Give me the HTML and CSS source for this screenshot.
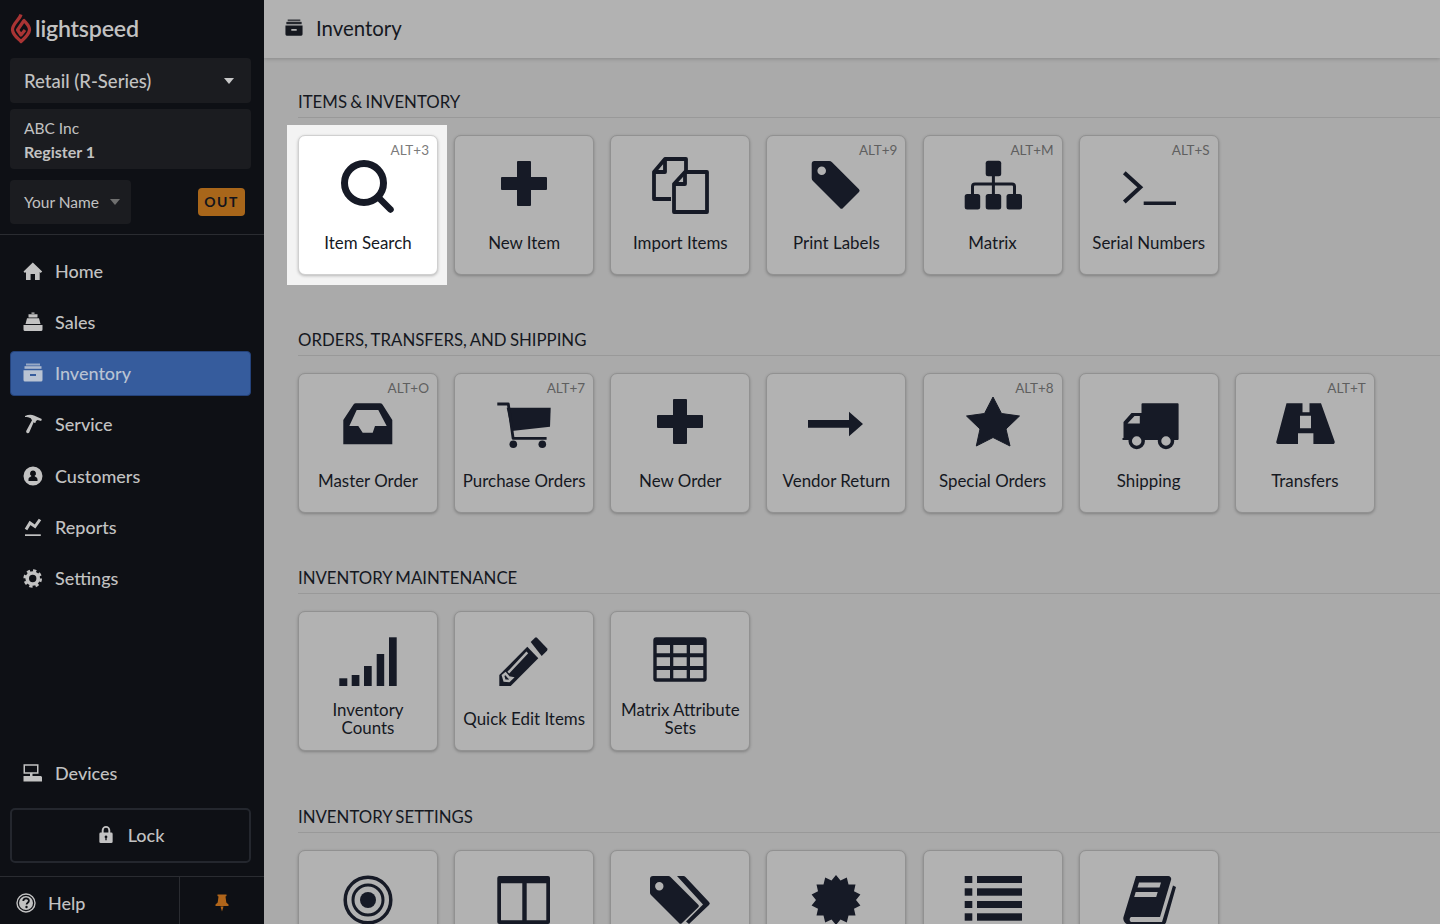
FILE: index.html
```html
<html>
    <head>
        <title>Inventory</title>
        <link rel="stylesheet" href="styles.css">
    </head>
    <body>
        <svg class="sprites" width="0" height="0">
            <symbol id="i-archive" viewBox="0 0 20 20">
                <path d="M3 .5h14v2H3z" opacity=".75"/>
                <path d="M1.5 3.2h17v2.6h-17z" opacity=".9"/>
                <path fill-rule="evenodd" d="M.5 7.2h19V17a1.500 1.500 0 0 1-1.500 1.500H2A1.500 1.500 0 0 1 .5 17zM7 11v2h6v-2z"/>
            </symbol>
        </svg>

        <aside class="sidebar">
            <div class="logo">
                <svg class="logo-mark" viewBox="0 0 22 32">
                    <path d="M11 2.500C9.500 8 2 12 2.500 18c.4 5 5.500 8.500 8.500 11.500 3-3 8-6.500 8.500-11.500.3-4-3.500-7-5.500-9.500L7.500 18l3.500 5 4-5" fill="none" stroke="#a93434" stroke-width="3.200" stroke-linejoin="round"/>
                </svg>
                <span class="logo-text">lightspeed</span>
            </div>
            <div class="product-select">
                <span>Retail (R-Series)</span>
                <i class="caret"></i>
            </div>
            <div class="register">
                <div class="register-org">ABC Inc</div>
                <div class="register-name">Register 1</div>
            </div>
            <div class="user-row">
                <div class="user-select">
                    <span>Your Name</span>
                    <i class="caret caret-dim"></i>
                </div>
                <div class="out-badge">OUT</div>
            </div>

            <nav class="nav">
                <a class="nav-item">
                    <svg class="nav-icon" viewBox="0 0 20 20"><path d="M9.800 1.500 19.200 10.600l-1.500 1.500-1-1V19H12v-6H7.600v6H3v-7.900l-1 1-1.500-1.500z"/></svg>
                    Home
                </a>
                <a class="nav-item">
                    <svg class="nav-icon" viewBox="0 0 20 20"><path d="M8.500.5h3v1.300h-3zM5.500 2.300h9v3.200h-9zM4 6.300h12l1.500 5.700h-15zM.5 13h19v4.500A1.500 1.500 0 0 1 18 19H2a1.500 1.500 0 0 1-1.500-1.500z"/></svg>
                    Sales
                </a>
                <a class="nav-item active">
                    <svg class="nav-icon"><use href="#i-archive"/></svg>
                    Inventory
                </a>
                <a class="nav-item">
                    <svg class="nav-icon" viewBox="0 0 20 20"><path d="M2 2c3-1.500 6.500-1.700 9-.6l7.800 3.500-.6 2-3.700-1-1.800 1.400 .4 1-1.800 .6-.5-1L6.200 18.500a1.700 1.700 0 0 1-3-1.500L9 6.300 7.800 4.300C6.200 3.300 4 3 2 3z"/></svg>
                    Service
                </a>
                <a class="nav-item">
                    <svg class="nav-icon" viewBox="0 0 20 20"><path fill-rule="evenodd" d="M10 .500a9.500 9.500 0 1 1 0 19 9.500 9.500 0 0 1 0-19zM10 4.500a3 3 0 0 0-1.500 5.600c-.5 1-3 1-3 3.500V15h9v-1.400c0-2.500-2.500-2.500-3-3.500A3 3 0 0 0 10 4.500z"/></svg>
                    Customers
                </a>
                <a class="nav-item">
                    <svg class="nav-icon" viewBox="0 0 20 20"><path d="M2 17.300h15.800V19H2z"/><path d="M3 12.500 7 6l5 3.500L17 2.500" fill="none" stroke="currentColor" stroke-width="3"/></svg>
                    Reports
                </a>
                <a class="nav-item">
                    <svg class="nav-icon" viewBox="0 0 20 20"><circle cx="9.700" cy="10.500" r="5.500" fill="none" stroke="currentColor" stroke-width="3.600"/><circle cx="9.700" cy="10.500" r="8" fill="none" stroke="currentColor" stroke-width="2.600" stroke-dasharray="3.300 3"/></svg>
                    Settings
                </a>
                <a class="nav-item nav-bottom">
                    <svg class="nav-icon" viewBox="0 0 20 20"><path fill-rule="evenodd" d="M.5 1.300h15v9.500h-6V13h8.500l1 1v4.500H.5V13h6.500v-2.200H.5zM2 2.800v6.500h12V2.800z"/></svg>
                    Devices
                </a>
            </nav>

            <div class="lock-btn">
                <svg class="lock-icon" viewBox="0 0 16 20">
                    <path fill-rule="evenodd" d="M3.500 8V5.500a4.500 4.500 0 0 1 9 0V8h1A1.500 1.500 0 0 1 15 9.500v8a1.500 1.500 0 0 1-1.500 1.500h-11A1.500 1.500 0 0 1 1 17.500v-8A1.500 1.500 0 0 1 2.500 8zM5.500 8h5V5.500a2.500 2.500 0 0 0-5 0zM8 11a1.500 1.500 0 0 0-.7 2.800V16h1.400v-2.200A1.500 1.500 0 0 0 8 11z"/>
                </svg>
                Lock
            </div>

            <div class="side-footer">
                <div class="help">
                    <svg class="help-icon" viewBox="0 0 20 20">
                        <circle cx="10" cy="10" r="9" fill="none" stroke="currentColor" stroke-width="1.400"/>
                        <circle cx="10" cy="10" r="7"/>
                        <path d="M7.300 8c0-3.400 5.600-3.400 5.600-.2 0 2-2.300 1.900-2.300 3.700" fill="none" stroke="#0e1015" stroke-width="1.800"/>
                        <circle cx="10.500" cy="14" r="1.200" fill="#0e1015"/>
                    </svg>
                    Help
                </div>
                <div class="pin">
                    <svg class="pin-icon" viewBox="0 0 14 18"><path d="M2.500.5h9v1.500l-1 .5.8 6 2.200 2V12H.5v-1.500l2.200-2 .8-6-1-.5zM5.500 12.500h3L7 17.500z"/></svg>
                </div>
            </div>
        </aside>

        <div class="content">
            <header class="topbar">
                <svg class="topbar-icon"><use href="#i-archive"/></svg>
                <span>Inventory</span>
            </header>

            <main class="main">
                <section class="group">
                    <h2 class="group-title">Items &amp; Inventory</h2>
                    <div class="tiles">
                        <a class="tile spotlight">
                            <span class="shortcut">ALT+3</span>
                            <svg class="tile-icon" viewBox="0 0 60 60">
                                <circle cx="26" cy="28" r="19.500" fill="none" stroke="currentColor" stroke-width="7"/>
                                <path d="M40 42 52.500 54.500" fill="none" stroke="currentColor" stroke-width="6.500" stroke-linecap="round"/>
                            </svg>
                            <span class="tile-label">Item Search</span>
                        </a>
                        <a class="tile">
                            <svg class="tile-icon" viewBox="0 0 60 60"><path d="M24 6h12a1 1 0 0 1 1 1v15h15a1 1 0 0 1 1 1v11a1 1 0 0 1-1 1H37v15a1 1 0 0 1-1 1H24a1 1 0 0 1-1-1V35H8a1 1 0 0 1-1-1V23a1 1 0 0 1 1-1h15V7a1 1 0 0 1 1-1z"/></svg>
                            <span class="tile-label">New Item</span>
                        </a>
                        <a class="tile">
                            <svg class="tile-icon line" viewBox="0 0 60 60">
                                <path d="M21 44H4V17L15 4h21v12"/><path d="M15 4v13H4"/>
                                <path d="M35 17h22v40H24V29z"/><path d="M35 17v12H24"/>
                            </svg>
                            <span class="tile-label">Import Items</span>
                        </a>
                        <a class="tile">
                            <span class="shortcut">ALT+9</span>
                            <svg class="tile-icon" viewBox="0 0 60 60"><path fill-rule="evenodd" d="M9 6h14a4 4 0 0 1 3 1.200l27 27a2 2 0 0 1 0 2.800L37 53a2 2 0 0 1-3 0L7 26a4 4 0 0 1-1.300-3V9A3 3 0 0 1 9 6zM15.700 11.500a4.300 4.300 0 1 0 0 8.600 4.300 4.300 0 0 0 0-8.600z"/></svg>
                            <span class="tile-label">Print Labels</span>
                        </a>
                        <a class="tile">
                            <span class="shortcut">ALT+M</span>
                            <svg class="tile-icon" viewBox="0 0 60 60">
                                <rect x="22.700" y="5.700" width="15.500" height="15.500" rx="2.500"/>
                                <rect x="1.700" y="39" width="15.500" height="15.500" rx="2.500"/>
                                <rect x="22.700" y="39" width="15.500" height="15.500" rx="2.500"/>
                                <rect x="43.500" y="39" width="15.500" height="15.500" rx="2.500"/>
                                <path d="M30.400 20v20M9.500 40v-8.500a2.500 2.500 0 0 1 2.500-2.500h37a2.500 2.500 0 0 1 2.500 2.500V40" fill="none" stroke="currentColor" stroke-width="3"/>
                            </svg>
                            <span class="tile-label">Matrix</span>
                        </a>
                        <a class="tile">
                            <span class="shortcut">ALT+S</span>
                            <svg class="tile-icon" viewBox="0 0 60 60">
                                <path d="M5.300 17.700 21.300 32.300 5.300 47" fill="none" stroke="currentColor" stroke-width="4"/>
                                <path d="M24.700 48.300H57" fill="none" stroke="currentColor" stroke-width="3.600"/>
                            </svg>
                            <span class="tile-label">Serial Numbers</span>
                        </a>
                    </div>
                </section>

                <section class="group">
                    <h2 class="group-title">Orders, Transfers, and Shipping</h2>
                    <div class="tiles">
                        <a class="tile">
                            <span class="shortcut">ALT+O</span>
                            <svg class="tile-icon" viewBox="0 0 60 60"><path fill-rule="evenodd" d="M5.300 51.300V27L15.500 11.500a3 3 0 0 1 2.500-1.200h24a3 3 0 0 1 2.500 1.200L54.300 27v24.300zM11.300 33H20.300l4.400 6.700h10L37 33h11.700L40.300 17H18.700z"/></svg>
                            <span class="tile-label">Master Order</span>
                        </a>
                        <a class="tile">
                            <span class="shortcut">ALT+7</span>
                            <svg class="tile-icon" viewBox="0 0 60 60">
                                <path d="M12.700 14.700h44L56 33.700l-38.300 4.300z"/>
                                <path d="M3.300 11h11l4.800 34.300h33.500" fill="none" stroke="currentColor" stroke-width="2.800" stroke-linejoin="round"/>
                                <circle cx="19.300" cy="51.300" r="3.800"/><circle cx="48.300" cy="51.300" r="3.800"/>
                            </svg>
                            <span class="tile-label">Purchase Orders</span>
                        </a>
                        <a class="tile">
                            <svg class="tile-icon" viewBox="0 0 60 60"><path d="M24 6h12a1 1 0 0 1 1 1v15h15a1 1 0 0 1 1 1v11a1 1 0 0 1-1 1H37v15a1 1 0 0 1-1 1H24a1 1 0 0 1-1-1V35H8a1 1 0 0 1-1-1V23a1 1 0 0 1 1-1h15V7a1 1 0 0 1 1-1z"/></svg>
                            <span class="tile-label">New Order</span>
                        </a>
                        <a class="tile">
                            <svg class="tile-icon" viewBox="0 0 60 60"><path d="M2 27h41v-8.300L57 31 43 43.300V34.700H2z"/></svg>
                            <span class="tile-label">Vendor Return</span>
                        </a>
                        <a class="tile">
                            <span class="shortcut">ALT+8</span>
                            <svg class="tile-icon" viewBox="0 0 60 60"><path d="M30 4 38.500 20.500 56.500 23 43 36 47 53 30 44.500 13.300 53 17 36 3.500 23 21.500 20.500z" stroke="currentColor" stroke-linejoin="round"/></svg>
                            <span class="tile-label">Special Orders</span>
                        </a>
                        <a class="tile">
                            <svg class="tile-icon" viewBox="0 0 60 60">
                                <path fill-rule="evenodd" d="M23.600 10.300h35a1 1 0 0 1 1 1V46a1 1 0 0 1-1 1H3.500v-2H4.500V29l8-9h10V11.300a1 1 0 0 1 1-1zM15.500 23 8.500 30.500h12.300V23z"/>
                                <circle cx="17.700" cy="48" r="6.500" class="hole" stroke="currentColor" stroke-width="3.500"/>
                                <circle cx="47" cy="48" r="6.500" class="hole" stroke="currentColor" stroke-width="3.500"/>
                            </svg>
                            <span class="tile-label">Shipping</span>
                        </a>
                        <a class="tile">
                            <span class="shortcut">ALT+T</span>
                            <svg class="tile-icon" viewBox="0 0 60 60"><path fill-rule="evenodd" d="M11.500 10.300h16v9h7v-9h11.500L59.500 48a2 2 0 0 1-2 3H38.400V40.300H23V51H3a2 2 0 0 1-1.500-3zM25 22.700v12.600h11V22.700z"/></svg>
                            <span class="tile-label">Transfers</span>
                        </a>
                    </div>
                </section>

                <section class="group">
                    <h2 class="group-title">Inventory Maintenance</h2>
                    <div class="tiles">
                        <a class="tile">
                            <svg class="tile-icon" viewBox="0 0 60 60">
                                <rect x="1.300" y="47.300" width="8" height="7.700"/>
                                <rect x="13.700" y="44" width="7.700" height="11"/>
                                <rect x="26" y="35" width="7.700" height="20"/>
                                <rect x="38.700" y="23" width="7.500" height="32"/>
                                <rect x="51" y="6.300" width="7.700" height="48.700"/>
                            </svg>
                            <span class="tile-label">Inventory Counts</span>
                        </a>
                        <a class="tile">
                            <svg class="tile-icon" viewBox="0 0 60 60">
                                <path d="M5.300 55V44L33.300 15.700 44.300 27.300 16.700 55z"/>
                                <path d="M36.700 11 41 6.700a1.500 1.500 0 0 1 2 0l10 10.500a2 2 0 0 1 0 2.500L47.700 25z"/>
                                <path d="M14.300 41.700 33.300 21.300M9 44.500l2.500-2 3.500 4 3 .5-3 3-4.500-.5z" fill="none" class="hole-line" stroke-width="2.500"/>
                            </svg>
                            <span class="tile-label">Quick Edit Items</span>
                        </a>
                        <a class="tile">
                            <svg class="tile-icon" viewBox="0 0 60 60"><path fill-rule="evenodd" d="M6.300 6.300h47.400a3 3 0 0 1 3 3v38.400a3 3 0 0 1-3 3H6.300a3 3 0 0 1-3-3V9.300a3 3 0 0 1 3-3zM6.700 14v8.300H20V14zM23.300 14v8.300h13.400V14zM40 14v8.300h13.300V14zM6.700 26.300V35H20v-8.700zM23.300 26.300V35h13.400v-8.700zM40 26.300V35h13.300v-8.700zM6.700 39v8.300H20V39zM23.300 39v8.300h13.400V39zM40 39v8.300h13.300V39z"/></svg>
                            <span class="tile-label">Matrix Attribute Sets</span>
                        </a>
                    </div>
                </section>

                <section class="group">
                    <h2 class="group-title">Inventory Settings</h2>
                    <div class="tiles">
                        <a class="tile">
                            <svg class="tile-icon" viewBox="0 0 60 60">
                                <circle cx="30" cy="30" r="22.800" fill="none" stroke="currentColor" stroke-width="3.500"/>
                                <circle cx="30" cy="30" r="15" fill="none" stroke="currentColor" stroke-width="3"/>
                                <circle cx="30" cy="30" r="8"/>
                            </svg>
                        </a>
                        <a class="tile">
                            <svg class="tile-icon" viewBox="0 0 60 60"><path fill-rule="evenodd" d="M5.300 6h48.700a2 2 0 0 1 2 2v44a2 2 0 0 1-2 2H5.300a2 2 0 0 1-2-2V8a2 2 0 0 1 2-2zM7 13.300v37h21.300v-37zM32.700 13.300v37h19.600v-37z"/></svg>
                        </a>
                        <a class="tile">
                            <svg class="tile-icon" viewBox="0 0 60 60">
                                <path fill-rule="evenodd" d="M3 6h15a3 3 0 0 1 2.500 1L48 34.500a2 2 0 0 1 0 3L32 53a2 2 0 0 1-3 0L1 25a3 3 0 0 1-1-2V9a3 3 0 0 1 3-3zM9.300 12a4.200 4.200 0 1 0 0 8.400 4.200 4.200 0 0 0 0-8.400z"/>
                                <path d="M27 6h6a3 3 0 0 1 2.500 1l23.500 25a2 2 0 0 1 0 3L39 54l-3-2.500L53 34.500z"/>
                            </svg>
                        </a>
                        <a class="tile">
                            <svg class="tile-icon" viewBox="0 0 60 60"><path d="M30 5 34.500 10.500 40.800 7.500 42.500 14.400 49.500 14.400 48 21.300 54.400 24.400 50 30 54.400 35.600 48 38.700 49.500 45.600 42.500 45.600 40.800 52.500 34.500 49.500 30 55 25.500 49.500 19.200 52.500 17.500 45.600 10.500 45.600 12 38.700 5.600 35.600 10 30 5.600 24.400 12 21.300 10.500 14.400 17.500 14.400 19.200 7.500 25.500 10.500z"/></svg>
                        </a>
                        <a class="tile">
                            <svg class="tile-icon" viewBox="0 0 60 60">
                                <rect x="1.700" y="6" width="7.600" height="7"/><rect x="14" y="6" width="45" height="7"/>
                                <rect x="1.700" y="18.300" width="7.600" height="7.400"/><rect x="14" y="18.300" width="45" height="7.400"/>
                                <rect x="1.700" y="31" width="7.600" height="7"/><rect x="14" y="31" width="45" height="7"/>
                                <rect x="1.700" y="43.300" width="7.600" height="7.400"/><rect x="14" y="43.300" width="45" height="7.400"/>
                            </svg>
                        </a>
                        <a class="tile">
                            <svg class="tile-icon" viewBox="0 0 60 60">
                                <path fill-rule="evenodd" d="M17 6h32a3 3 0 0 1 3 4L41 47H12a3 3 0 0 0 0 5h31L54 15.500l3 1.500-10 35.500a3 3 0 0 1-3 2H10a6 6 0 0 1-5.500-7.500zM20 12.500l-1.500 5h22l1.500-5zM16.700 22l-1.500 5h22l1.500-5z"/>
                            </svg>
                        </a>
                    </div>
                </section>
            </main>
        </div>
    </body>
</html>
```

FILE: styles.css
```css
* {
    margin: 0;
    padding: 0;
    box-sizing: border-box;
}

html,body {
    height: 100%;
    overflow: hidden;
}

body {
    display: flex;
    height: 100vh;
    font-family: Lato, "Open Sans", sans-serif;
    background: #aaaaaa;
}

.sprites {
    position: absolute;
}

/* sidebar */
.sidebar {
    width: 264px;
    flex: none;
    display: flex;
    flex-direction: column;
    background: #0e1015;
    color: #c2c2c2;
    font-size: 18px;
}

.logo {
    height: 58px;
    display: flex;
    align-items: center;
    padding: 0 0 2px 10px;
    gap: 3px;
}

.logo-mark {
    width: 22px;
    height: 32px;
}

.logo-text {
    font-size: 23.2px;
    font-weight: 600;
    letter-spacing: -0.2px;
    color: #c2c2c2;
}

.product-select,
.register,
.user-select {
    background: #1b1c20;
    border-radius: 4px;
}

.product-select {
    height: 45px;
    margin: 0 12.9px 0 10px;
    padding: 0 17px 0 14px;
    display: flex;
    align-items: center;
    justify-content: space-between;
    font-size: 18.5px;
    font-weight: 500;
}

.caret {
    width: 0;
    height: 0;
    border-left: 5px solid transparent;
    border-right: 5px solid transparent;
    border-top: 6px solid #c8c8c8;
}

.caret-dim {
    border-top-color: #6f6f6f;
}

.register {
    height: 60px;
    margin: 6px 12.9px 0 10px;
    padding: 7px 14px;
    font-size: 16px;
    line-height: 24px;
}

.register-org {
    font-size: 15.5px;
}

.register-name {
    font-weight: 700;
}

.user-row {
    display: flex;
    align-items: center;
    justify-content: space-between;
    margin-top: 11px;
    padding: 0 19px 10px 10px;
    border-bottom: 1px solid #2a2c31;
    height: 55px;
}

.user-select {
    width: 121px;
    height: 44px;
    padding: 0 11px 1px 14px;
    display: flex;
    align-items: center;
    justify-content: space-between;
    font-size: 15.5px;
}

.out-badge {
    width: 47px;
    height: 28px;
    line-height: 28px;
    text-align: center;
    background: #a8661a;
    border-radius: 4px;
    color: #12141c;
    font-size: 14px;
    font-weight: 700;
    letter-spacing: 1.5px;
}

.nav {
    flex: 1;
    display: flex;
    flex-direction: column;
    gap: 6.33px;
    padding-top: 13px;
}

.nav-item {
    height: 45px;
    margin: 0 12.9px 0 10px;
    padding-left: 13px;
    flex: none;
    display: flex;
    align-items: center;
    gap: 12px;
    border-radius: 4px;
    font-weight: 500;
}

.nav-item.active {
    background: #365c9d;
    color: #b9c3d3;
    border: 1px solid #24427a;
    padding-left: 12px;
}

.nav-bottom {
    margin-top: auto;
}

.nav-icon {
    width: 20px;
    height: 20px;
    fill: currentColor;
    flex: none;
}

.lock-btn {
    height: 55px;
    flex: none;
    margin: 12.5px 12.9px 13px 10px;
    padding: 0 0 2px 1px;
    display: flex;
    align-items: center;
    justify-content: center;
    gap: 14px;
    border: 2px solid #24272e;
    border-radius: 5px;
    font-weight: 500;
}

.lock-icon {
    width: 16px;
    height: 19px;
    fill: currentColor;
}

.side-footer {
    height: 48px;
    flex: none;
    display: flex;
    border-top: 1px solid #2a2c31;
}

.help {
    width: 180px;
    padding: 4px 0 0 16px;
    display: flex;
    align-items: center;
    gap: 12px;
    border-right: 1px solid #2a2c31;
    font-weight: 500;
}

.help-icon {
    width: 20px;
    height: 20px;
    fill: currentColor;
}

.pin {
    flex: 1;
    display: flex;
    align-items: center;
    justify-content: center;
    padding: 4px 1px 0 0;
}

.pin-icon {
    width: 14px;
    height: 18px;
    fill: #b0651a;
}

/* right side */
.content {
    flex: 1;
    min-width: 0;
    display: flex;
    flex-direction: column;
    overflow: hidden;
}

.topbar {
    height: 58px;
    flex: none;
    display: flex;
    align-items: center;
    gap: 13px;
    padding: 0 0 3px 21px;
    background: #b2b2b2;
    box-shadow: 0 1px 4px rgba(0, 0, 0, 0.2);
    color: #15181f;
    font-size: 20.4px;
    position: relative;
    z-index: 1;
}

.topbar-icon {
    width: 18px;
    height: 18px;
    fill: currentColor;
}

.main {
    flex: 1;
    min-height: 0;
    overflow: hidden;
    padding: 32px 0 0 34px;
    position: relative;
    z-index: 0;
    color: #15181f;
}

.group {
    margin-bottom: 53.2px;
}

.group-title {
    font-size: 16.8px;
    font-weight: 400;
    line-height: 22px;
    word-spacing: -1px;
    text-transform: uppercase;
    padding: 1px 0 4px;
    border-bottom: 1px solid #999999;
    margin-bottom: 17px;
}

.tiles {
    display: flex;
    gap: 16.15px;
}

.tile {
    width: 140px;
    height: 140px;
    flex: none;
    position: relative;
    display: flex;
    flex-direction: column;
    align-items: center;
    padding: 19px 6px 0;
    background: #b2b2b2;
    border: 1px solid #919191;
    border-radius: 7px;
    box-shadow: 0 1px 3px rgba(0, 0, 0, 0.25);
    color: #161a26;
}

.tile.spotlight {
    background: #ffffff;
    border-color: #d0d0d0;
}

.tile.spotlight::before {
    content: "";
    position: absolute;
    left: -12px;
    top: -11px;
    width: 160px;
    height: 160px;
    background: #f3f3f3;
    z-index: -1;
}

.shortcut {
    position: absolute;
    top: 5px;
    right: 8px;
    font-size: 13.5px;
    line-height: 18px;
    color: #5f5f5f;
}

.spotlight .shortcut {
    color: #7b7b7b;
}

.tile-icon {
    width: 60px;
    height: 60px;
    flex: none;
    fill: currentColor;
    overflow: visible;
}

.tile-icon.line {
    fill: none;
    stroke: currentColor;
    stroke-width: 3.8;
    stroke-linejoin: round;
}

.hole {
    fill: #b2b2b2;
}

.hole-line {
    stroke: #b2b2b2;
}

.tile-label {
    height: 36px;
    margin-top: 10px;
    padding-bottom: 1px;
    display: flex;
    align-items: center;
    text-align: center;
    font-size: 16.9px;
    line-height: 18px;
    color: #15181f;
}
```
